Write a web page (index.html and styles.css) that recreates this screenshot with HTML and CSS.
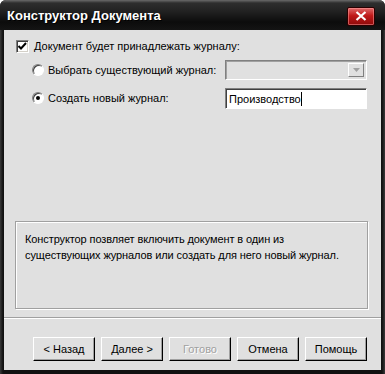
FILE: index.html
```html
<!DOCTYPE html>
<html>
<head>
  <title>Конструктор Документа</title>
  <link rel="stylesheet" href="styles.css">
</head>
<body>
  <div class="window">
    <div class="titlebar">
      <span class="title">Конструктор Документа</span>
      <span class="close">
        <svg width="12" height="10" viewBox="0 0 12 10">
          <path d="M1.5 1 L10.5 9 M10.5 1 L1.5 9" stroke="#fff" stroke-width="2.2"/>
        </svg>
      </span>
    </div>

    <div class="client">
      <div class="options">
        <div class="row row-check">
          <span class="checkbox">
            <svg width="9" height="9" viewBox="0 0 9 9">
              <path d="M0.5 4 L3 6.5 L8 1" stroke="#000" stroke-width="2" fill="none"/>
            </svg>
          </span>
          <span class="label">Документ будет принадлежать журналу:</span>
        </div>

        <div class="row row-radio">
          <span class="radio"></span>
          <span class="label grow">Выбрать существующий журнал:</span>
          <span class="combo">
            <span class="combo-btn">
              <svg width="7" height="4" viewBox="0 0 7 4"><path d="M0 0 H7 L3.5 4 Z" fill="#a0a0a0"/></svg>
            </span>
          </span>
        </div>

        <div class="row row-radio row-new">
          <span class="radio checked"><span class="dot"></span></span>
          <span class="label grow">Создать новый журнал:</span>
          <span class="textbox">Производство<span class="caret"></span></span>
        </div>
      </div>

      <div class="desc">
        Конструктор позвляет включить документ в один из<br>
        существующих журналов или создать для него новый журнал.
      </div>

      <div class="separator"></div>

      <div class="buttons">
        <button class="btn">&lt; Назад</button>
        <button class="btn">Далее &gt;</button>
        <button class="btn disabled">Готово</button>
        <button class="btn">Отмена</button>
        <button class="btn">Помощь</button>
      </div>
    </div>
  </div>
</body>
</html>
```

FILE: styles.css
```css
* {
  box-sizing: border-box;
}

body {
  margin: 0;
  background: #ffffff;
  font-family: "Liberation Sans", Arial, sans-serif;
  font-size: 11px;
  color: #000;
}

.window {
  width: 385px;
  height: 374px;
  display: flex;
  flex-direction: column;
  background: linear-gradient(to right, #3a3a3a, #111 3px, #111 calc(100% - 3px), #3a3a3a);
  border-radius: 6px 6px 0 0;
}

.titlebar {
  height: 30px;
  display: flex;
  align-items: center;
  justify-content: space-between;
  padding: 0 10px 0 7px;
  border-radius: 6px 6px 0 0;
  background: linear-gradient(to bottom, #6a6a6a 0px, #2e2e2e 3px, #202020 12px, #0c0c0c 22px, #141414 30px);
}

.title {
  color: #fff;
  font-weight: bold;
  font-size: 13px;
  text-shadow: 1px 1px 0 #000;
  margin-top: 1px;
}

.close {
  width: 28px;
  height: 19px;
  display: flex;
  align-items: center;
  justify-content: center;
  border: 1px solid #2a0000;
  border-radius: 2px;
  background: linear-gradient(to bottom, #e06a6a, #c01a1a 45%, #8e0a0a);
  box-shadow: inset 0 0 0 1px rgba(255, 160, 160, 0.5);
  margin-top: 2px;
}

.client {
  flex: 1;
  margin: 0 4px 4px;
  background: #e0e0e0;
  display: flex;
  flex-direction: column;
}

.options {
  padding: 8px 14px 0 12px;
}

.row {
  display: flex;
  align-items: center;
}

.row-check {
  height: 16px;
}

.row-radio {
  height: 20px;
  margin-top: 6px;
  padding-left: 16px;
}

.row-new {
  margin-top: 8px;
}

.label {
  white-space: nowrap;
}

.grow {
  flex: 1;
}

.checkbox {
  width: 13px;
  height: 13px;
  margin-right: 5px;
  background: #fff;
  border-top: 1px solid #808080;
  border-left: 1px solid #808080;
  border-right: 1px solid #fff;
  border-bottom: 1px solid #fff;
  box-shadow: inset 1px 1px 0 #404040, inset -1px -1px 0 #d4d0c8;
  display: flex;
  align-items: center;
  justify-content: center;
}

.radio {
  width: 12px;
  height: 12px;
  border-radius: 50%;
  margin-right: 4px;
  background: #fff;
  border: 1px solid;
  border-color: #808080 #fff #fff #808080;
  box-shadow: inset 1px 1px 0 #404040;
  display: flex;
  align-items: center;
  justify-content: center;
}

.dot {
  width: 4px;
  height: 4px;
  border-radius: 50%;
  background: #000;
}

.combo {
  width: 142px;
  height: 20px;
  border: 1px solid;
  border-color: #808080 #fff #fff #808080;
  box-shadow: inset 1px 1px 0 #a0a0a0;
  background: #e0e0e0;
  display: flex;
  justify-content: flex-end;
  padding: 2px;
}

.combo-btn {
  width: 16px;
  border: 1px solid;
  border-color: #fff #808080 #808080 #fff;
  display: flex;
  align-items: center;
  justify-content: center;
}

.textbox {
  width: 142px;
  height: 21px;
  background: #fff;
  border: 1px solid;
  border-color: #808080 #fff #fff #808080;
  box-shadow: inset 1px 1px 0 #404040;
  padding: 2px 3px 0;
  display: flex;
  align-items: center;
  white-space: nowrap;
}

.caret {
  width: 1px;
  height: 14px;
  background: #000;
}

.desc {
  margin: auto 13px 0 11px;
  height: 88px;
  border: 1px solid #a0a0a0;
  box-shadow: inset 1px 1px 0 #fff, 1px 1px 0 #fff;
  padding: 9px 9px;
  line-height: 16px;
  white-space: nowrap;
  letter-spacing: -0.1px;
}

.separator {
  margin-top: 8px;
  height: 2px;
  border-top: 1px solid #a0a0a0;
  border-bottom: 1px solid #fff;
}

.buttons {
  display: flex;
  justify-content: flex-end;
  gap: 6px;
  padding: 18px 14px 9px;
}

.btn {
  width: 62px;
  height: 24px;
  font: inherit;
  color: #000;
  background: #e0e0e0;
  border: 1px solid;
  border-color: #fff #000 #000 #fff;
  box-shadow: inset -1px -1px 0 #a0a0a0;
  padding: 0;
}

.btn.disabled {
  color: #a0a0a0;
  text-shadow: 1px 1px 0 #fff;
}
```
